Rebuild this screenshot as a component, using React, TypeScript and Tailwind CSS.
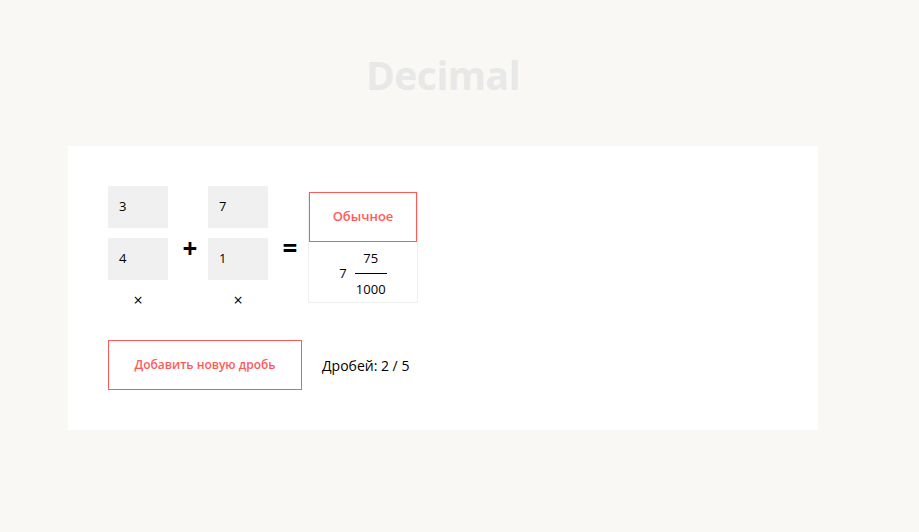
import React from "react";

export default function App() {
  const font = { fontFamily: '"Source Sans Pro", "Open Sans", "Noto Sans", sans-serif' };
  return (
    <div className="w-[919px] h-[532px] bg-[#faf8f5]" style={font}>
      <div className="w-[886px] flex flex-col items-center">
        <h1 className="mt-[50px] h-[50px] text-[39px] leading-[50px] font-bold text-[#e8e8e8] tracking-[-0.5px]">Decimal</h1>
        <div className="mt-[46px] w-[750px] h-[284px] bg-white pl-[40px] pt-[40px]">
          <div className="flex items-start">
            <div className="flex flex-col items-center">
              <div className="w-[60px] h-[42px] bg-[#f0f0f0] text-[13px] text-black pl-[11px] flex items-center">3</div>
              <div className="w-[60px] h-[42px] bg-[#f0f0f0] text-[13px] text-black pl-[11px] flex items-center mt-[10px]">4</div>
              <div className="text-[16px] leading-[14px] mt-[13px]">×</div>
            </div>
            <div className="w-[40px] h-[42px] mt-[52px] -translate-y-[11px] translate-x-[2px] flex items-center justify-center text-[26px] font-bold leading-none">+</div>
            <div className="flex flex-col items-center">
              <div className="w-[60px] h-[42px] bg-[#f0f0f0] text-[13px] text-black pl-[11px] flex items-center">7</div>
              <div className="w-[60px] h-[42px] bg-[#f0f0f0] text-[13px] text-black pl-[11px] flex items-center mt-[10px]">1</div>
              <div className="text-[16px] leading-[14px] mt-[13px]">×</div>
            </div>
            <div className="w-[40px] h-[42px] mt-[42px] -translate-y-[1px] translate-x-[2px] flex items-center justify-center text-[26px] font-bold leading-none">=</div>
            <div className="mt-[6px] w-[110px] h-[111px] border border-[#eeeeee] flex flex-col items-center">
              <div className="w-[108px] h-[50px] border border-[#ff5a5a] -mt-px flex items-center justify-center text-[13px] font-semibold text-[#ff5a5a]">Обычное</div>
              <div className="flex items-center mt-[8px] text-[13px] text-black">
                <span className="mr-[8px]">7</span>
                <div className="flex flex-col items-center w-[32px]">
                  <span className="leading-[16px]">75</span>
                  <div className="w-[32px] h-px bg-black my-[7px]"></div>
                  <span className="leading-[16px]">1000</span>
                </div>
              </div>
            </div>
          </div>
          <div className="flex items-center mt-[33px]">
            <div className="w-[194px] h-[50px] border border-[#ff5a5a] flex items-center justify-center text-[12px] font-semibold text-[#ff5a5a]">Добавить новую дробь</div>
            <div className="ml-[20px] text-[14px] text-black">Дробей: 2 / 5</div>
          </div>
        </div>
      </div>
    </div>
  );
}
